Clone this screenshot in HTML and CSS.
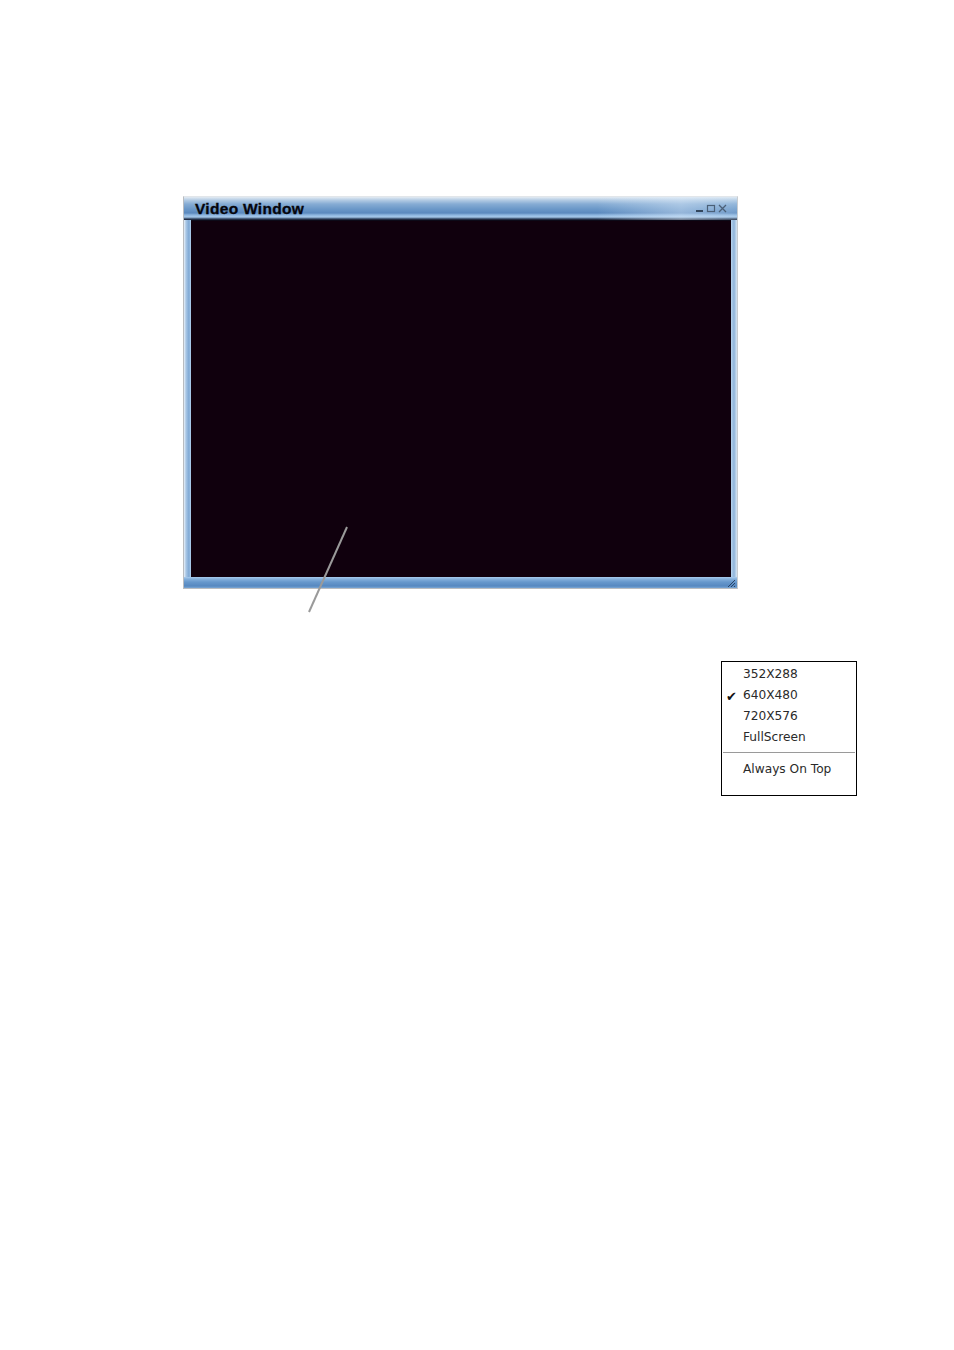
FILE: index.html
```html
<!DOCTYPE html>
<html>
<head>
<meta charset="utf-8">
<link rel="stylesheet" href="styles.css">
</head>
<body>
<div class="page">
  <div class="figure">
    <div class="window">
      <div class="frame">
        <div class="titlebar">
          <span class="title">Video Window</span>
          <span class="controls">
            <svg width="34" height="11" viewBox="0 0 34 11">
              <rect x="1" y="7" width="7" height="2" fill="#33475e"/>
              <rect x="12.5" y="2.5" width="7" height="6" fill="none" stroke="#4b6078" stroke-width="1.2"/>
              <path d="M24 2 L31 9 M31 2 L24 9" stroke="#4b6078" stroke-width="1.3"/>
            </svg>
          </span>
        </div>
        <div class="video"></div>
        <div class="bottombar">
          <svg class="grip" width="10" height="10" viewBox="0 0 10 10">
            <path d="M2 9 L9 2 M5 9 L9 5 M8 9 L9 8" stroke="#2a4466" stroke-width="1"/>
          </svg>
        </div>
      </div>
    </div>
    <svg class="pointer" width="60" height="100" viewBox="0 0 60 100">
      <line x1="48" y1="3" x2="10" y2="88" stroke="#9a9a9a" stroke-width="2"/>
    </svg>
  </div>
  <div class="menu">
    <div class="item">352X288</div>
    <div class="item checked"><span class="check">✔</span>640X480</div>
    <div class="item">720X576</div>
    <div class="item">FullScreen</div>
    <div class="sep"></div>
    <div class="item">Always On Top</div>
  </div>
</div>
</body>
</html>
```
FILE: styles.css
```css
html, body {
  margin: 0;
  padding: 0;
  background: #ffffff;
}
.page {
  width: 954px;
  height: 1350px;
  position: relative;
  font-family: "DejaVu Sans", "Liberation Sans", sans-serif;
}
.figure {
  position: relative;
  padding-top: 196px;
  padding-left: 183px;
  width: 555px;
}
.window {
  width: 555px;
  height: 393px;
  box-sizing: border-box;
  border: 1px solid #b9bcc0;
  border-top-color: #e2e6ea;
  border-right-color: #c8ccd0;
  background: #ffffff;
}
.frame {
  height: 100%;
  box-sizing: border-box;
  display: flex;
  flex-direction: column;
  padding: 0 6px 0 7px;
  background:
    linear-gradient(90deg, #e8f0f8 0px, #a9c7e6 2px, #7ea8d4 5px, #b4d2ee 7px, transparent 7px, transparent calc(100% - 6px), #b8d4ee calc(100% - 6px), #8fb4da calc(100% - 3px), #d7e6f4 100%);
  background-color: #8fb4dc;
}
.titlebar {
  height: 23px;
  margin: 0 -6px 0 -7px;
  padding: 0 8px 0 11px;
  display: flex;
  align-items: center;
  justify-content: space-between;
  background: linear-gradient(180deg, #e3ebf3 0px, #b4cce4 3px, #86acd4 7px, #6b98c8 12px, #5b89be 16px, #8db5df 18px, #a6c8ea 20px, #2c3f5c 22px, #1a1c2c 23px);
  position: relative;
}
.titlebar::after {
  content: "";
  position: absolute;
  right: 0;
  top: 0;
  bottom: 0;
  width: 140px;
  background: linear-gradient(90deg, rgba(255,255,255,0), rgba(220,235,250,0.45) 60%, rgba(200,225,245,0.2));
  pointer-events: none;
}
.title {
  font-family: "Liberation Sans", Arial, sans-serif;
  font-weight: bold;
  font-size: 15.5px;
  color: #05050c;
  letter-spacing: 0.3px;
  position: relative;
  z-index: 1;
  -webkit-text-stroke: 0.3px #05050c;
}
.controls {
  display: flex;
  position: relative;
  z-index: 1;
}
.video {
  flex: 1;
  background: #10000d;
  border-top: 1px solid #0c0a18;
}
.bottombar {
  height: 11px;
  margin: 0 -6px 0 -7px;
  position: relative;
  background: linear-gradient(180deg, #a9ccee 0px, #85b0dc 2px, #6798cc 5px, #5688c0 9px, #7aa6d4 11px);
}
.grip {
  position: absolute;
  right: 1px;
  bottom: 0px;
}
.pointer {
  position: absolute;
  left: 299px;
  top: 524px;
}
.menu {
  margin-left: 721px;
  margin-top: 72px;
  width: 136px;
  height: 135px;
  box-sizing: border-box;
  border: 1px solid #000000;
  background: #ffffff;
  padding-top: 2px;
}
.item {
  position: relative;
  height: 21px;
  line-height: 21px;
  padding-left: 21px;
  font-size: 12.2px;
  color: #2a2a2a;
}
.check {
  position: absolute;
  left: 4px;
  top: 1px;
  font-size: 13px;
  color: #111;
}
.sep {
  height: 1px;
  background: #9a9a9a;
  margin: 4px 1px 6px 1px;
}
```
